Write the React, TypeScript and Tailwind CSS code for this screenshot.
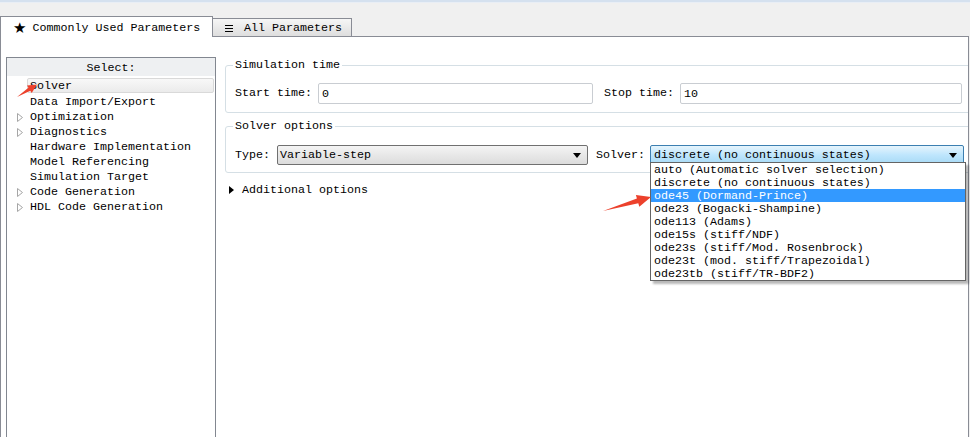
import React from 'react'

const treeItems = [
    { label: 'Data Import/Export', expandable: false },
    { label: 'Optimization', expandable: true },
    { label: 'Diagnostics', expandable: true },
    { label: 'Hardware Implementation', expandable: false },
    { label: 'Model Referencing', expandable: false },
    { label: 'Simulation Target', expandable: false },
    { label: 'Code Generation', expandable: true },
    { label: 'HDL Code Generation', expandable: true },
]

const solvers = [
    'auto (Automatic solver selection)',
    'discrete (no continuous states)',
    'ode45 (Dormand-Prince)',
    'ode23 (Bogacki-Shampine)',
    'ode113 (Adams)',
    'ode15s (stiff/NDF)',
    'ode23s (stiff/Mod. Rosenbrock)',
    'ode23t (mod. stiff/Trapezoidal)',
    'ode23tb (stiff/TR-BDF2)',
]

function OutlineTriangle() {
    return (
        <svg width="6" height="9" viewBox="0 0 6 9" className="shrink-0">
            <path d="M0.5 0.5 L5.5 4.5 L0.5 8.5 Z" fill="white" stroke="#a6a6a6" strokeWidth="1" />
        </svg>
    )
}

function DownArrow() {
    return (
        <svg width="8" height="5" viewBox="0 0 8 5" className="shrink-0">
            <path d="M0 0 H8 L4 5 Z" fill="#000" />
        </svg>
    )
}

export default function App() {
    return (
        <div className="relative w-[970px] h-[437px] overflow-hidden bg-[#f0f0f0] text-black font-['Liberation_Mono',monospace] text-[11.67px]">
            <div className="h-[2px] bg-[#d5e1ef]" />
            <div className="h-px bg-[#e9eef5]" />
            <div className="h-[13px]" />

            {/* tabs */}
            <div className="flex items-end h-[21px] w-[969px]">
                <div className="relative z-10 flex items-center w-[213px] h-[21px] bg-white border border-b-0 border-[#898c95] pl-[12px] pt-[2px] leading-[14px]">
                    <span className="font-['DejaVu_Sans',sans-serif] text-[15px] leading-[14px]">★</span>
                    <span className="ml-[6px]">Commonly Used Parameters</span>
                </div>
                <div className="flex items-center w-[139px] h-[19px] border-t border-r border-b border-[#898c95] bg-gradient-to-b from-[#f6f6f6] to-[#dedede] pl-[12px] pt-px leading-[14px]">
                    <svg width="8" height="7" viewBox="0 0 8 7" className="shrink-0">
                        <path d="M0 0.5 H8 M0 3.5 H8 M0 6.5 H8" stroke="#000" strokeWidth="1" />
                    </svg>
                    <span className="ml-[11px]">All Parameters</span>
                </div>
                <div className="flex-1 h-px bg-[#898c95]" />
            </div>

            {/* pane */}
            <div className="flex w-[969px] h-[400px] overflow-hidden bg-white border-l border-r border-[#898c95] pt-[20px] pl-[5px]">
                <div className="shrink-0 w-[210px] h-[400px] border border-[#828790]">
                    <div className="h-[18px] bg-[#eef0f2] text-center leading-[20px]">Select:</div>
                    <div className="pt-[2px]">
                        <div className="ml-[20px] mr-px h-[15px] rounded-[2px] border border-[#d9d9d9] bg-gradient-to-b from-[#f8f8f8] to-[#ebebeb] pl-[2px] leading-[15px]">
                            Solver
                        </div>
                        {treeItems.map((item) => (
                            <div key={item.label} className="flex items-start h-[15px] leading-[18px]">
                                <div className="w-[23px] pl-[10px] pt-[5px] flex">
                                    {item.expandable && <OutlineTriangle />}
                                </div>
                                <span>{item.label}</span>
                            </div>
                        ))}
                    </div>
                </div>

                <div className="shrink-0 w-[749px] ml-[9px]">
                    <fieldset className="border border-[#d5dfe5] rounded-[3px] px-[9px] pb-[8px]">
                        <legend className="-ml-[2px] px-[2px] leading-[17px]">Simulation time</legend>
                        <div className="flex items-center mt-[9px] h-[21px]">
                            <span className="leading-[23px]">Start time:</span>
                            <div className="flex-1 h-[21px] ml-[6px] border border-[#c9cdd2] rounded-[2px] pl-[3px] leading-[21px]">0</div>
                            <span className="ml-[11px] leading-[23px]">Stop time:</span>
                            <div className="w-[282px] h-[21px] ml-[6px] border border-[#c9cdd2] rounded-[2px] pl-[3px] leading-[21px]">10</div>
                            <div className="w-[2px]" />
                        </div>
                    </fieldset>

                    <fieldset className="mt-[5px] border border-[#d5dfe5] rounded-[3px] px-[9px] pb-[7px]">
                        <legend className="-ml-[2px] px-[2px] leading-[16px]">Solver options</legend>
                        <div className="flex items-center mt-[11px] h-[20px]">
                            <span className="leading-[22px]">Type:</span>
                            <div className="flex items-center w-[311px] h-[20px] ml-[7px] border border-[#707070] rounded-[2px] bg-gradient-to-b from-[#f4f4f4] to-[#dcdcdc] pl-[2px] pr-[6px] leading-[20px]">
                                <span className="flex-1">Variable-step</span>
                                <DownArrow />
                            </div>
                            <span className="ml-[8px] leading-[22px]">Solver:</span>
                            <div className="flex items-center w-[314px] h-[20px] ml-[5px] border border-[#3c7fb1] rounded-[2px] bg-gradient-to-b from-[#e6f4fc] via-[#bee6fd] to-[#a7d9f5] pl-[3px] pr-[6px] leading-[20px]">
                                <span className="flex-1">discrete (no continuous states)</span>
                                <DownArrow />
                            </div>
                        </div>
                    </fieldset>

                    <div className="flex items-center mt-[10px] h-[14px] pl-[4px]">
                        <svg width="5" height="8" viewBox="0 0 5 8" className="shrink-0">
                            <path d="M0 0 L5 4 L0 8 Z" fill="#000" />
                        </svg>
                        <span className="ml-[8px] leading-[16px]">Additional options</span>
                    </div>
                </div>
            </div>

            {/* open dropdown list */}
            <div className="absolute left-[650px] top-[162px] w-[316px] border border-[#646464] bg-white shadow-[3px_3px_2px_rgba(0,0,0,0.28)]">
                {solvers.map((s, i) => (
                    <div
                        key={s}
                        className={
                            i === 2
                                ? 'h-[13px] leading-[15px] pl-[3px] bg-[#3399ff] text-white'
                                : 'h-[13px] leading-[15px] pl-[3px]'
                        }
                    >
                        {s}
                    </div>
                ))}
            </div>

            {/* annotation arrows */}
            <svg className="absolute left-0 top-0 pointer-events-none" width="970" height="437">
                <polygon
                    points="17,97 30.3,90.8 31.7,93.1 37,84.5 27,85.5 28.4,87.8"
                    fill="#ec412c"
                />
                <polygon
                    points="603,211 638.3,203.3 639.3,206.7 651,197 635.9,195.1 636.9,198.5"
                    fill="#ec412c"
                />
            </svg>
        </div>
    )
}
